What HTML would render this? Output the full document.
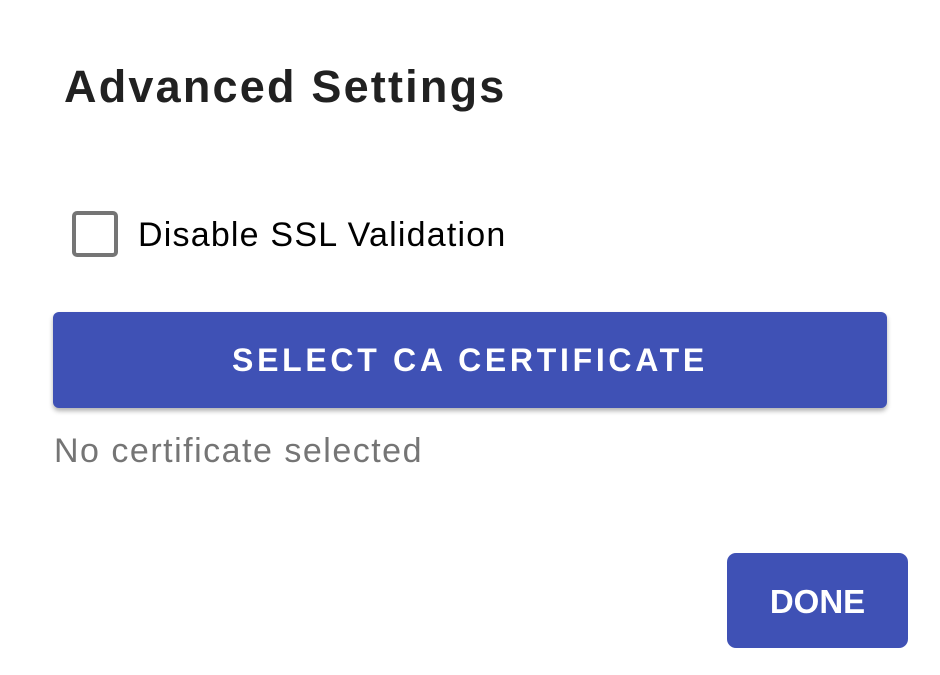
<!DOCTYPE html>
<html><head><style>
body{margin:0;width:940px;height:675px;background:#fff;font-family:"Liberation Sans",sans-serif;position:relative;overflow:hidden}
.a{position:absolute;white-space:nowrap}
</style></head><body>
<div class="a" style="left:64px;top:61px;font-size:45px;color:#212121;font-weight:bold;letter-spacing:2.2px">Advanced Settings</div>
<div class="a" style="left:72px;top:211px;width:38px;height:38px;border:4px solid #757575;border-radius:5px"></div>
<div class="a" style="left:138px;top:216px;font-size:34px;color:#000;letter-spacing:1.2px">Disable SSL Validation</div>
<div class="a" style="left:53px;top:312px;width:834px;height:96px;background:#3f51b5;border-radius:6px;box-shadow:0 3px 5px rgba(0,0,0,.3);color:#fff;font-size:32px;font-weight:bold;letter-spacing:3.7px;text-align:center;line-height:96px">SELECT CA CERTIFICATE</div>
<div class="a" style="left:54px;top:432px;font-size:34px;color:#757575;letter-spacing:1.5px">No certificate selected</div>
<div class="a" style="left:727px;top:553px;width:181px;height:95px;background:#3f51b5;border-radius:9px;color:#fff;font-size:33px;font-weight:bold;text-align:center;line-height:98px">DONE</div>
</body></html>
